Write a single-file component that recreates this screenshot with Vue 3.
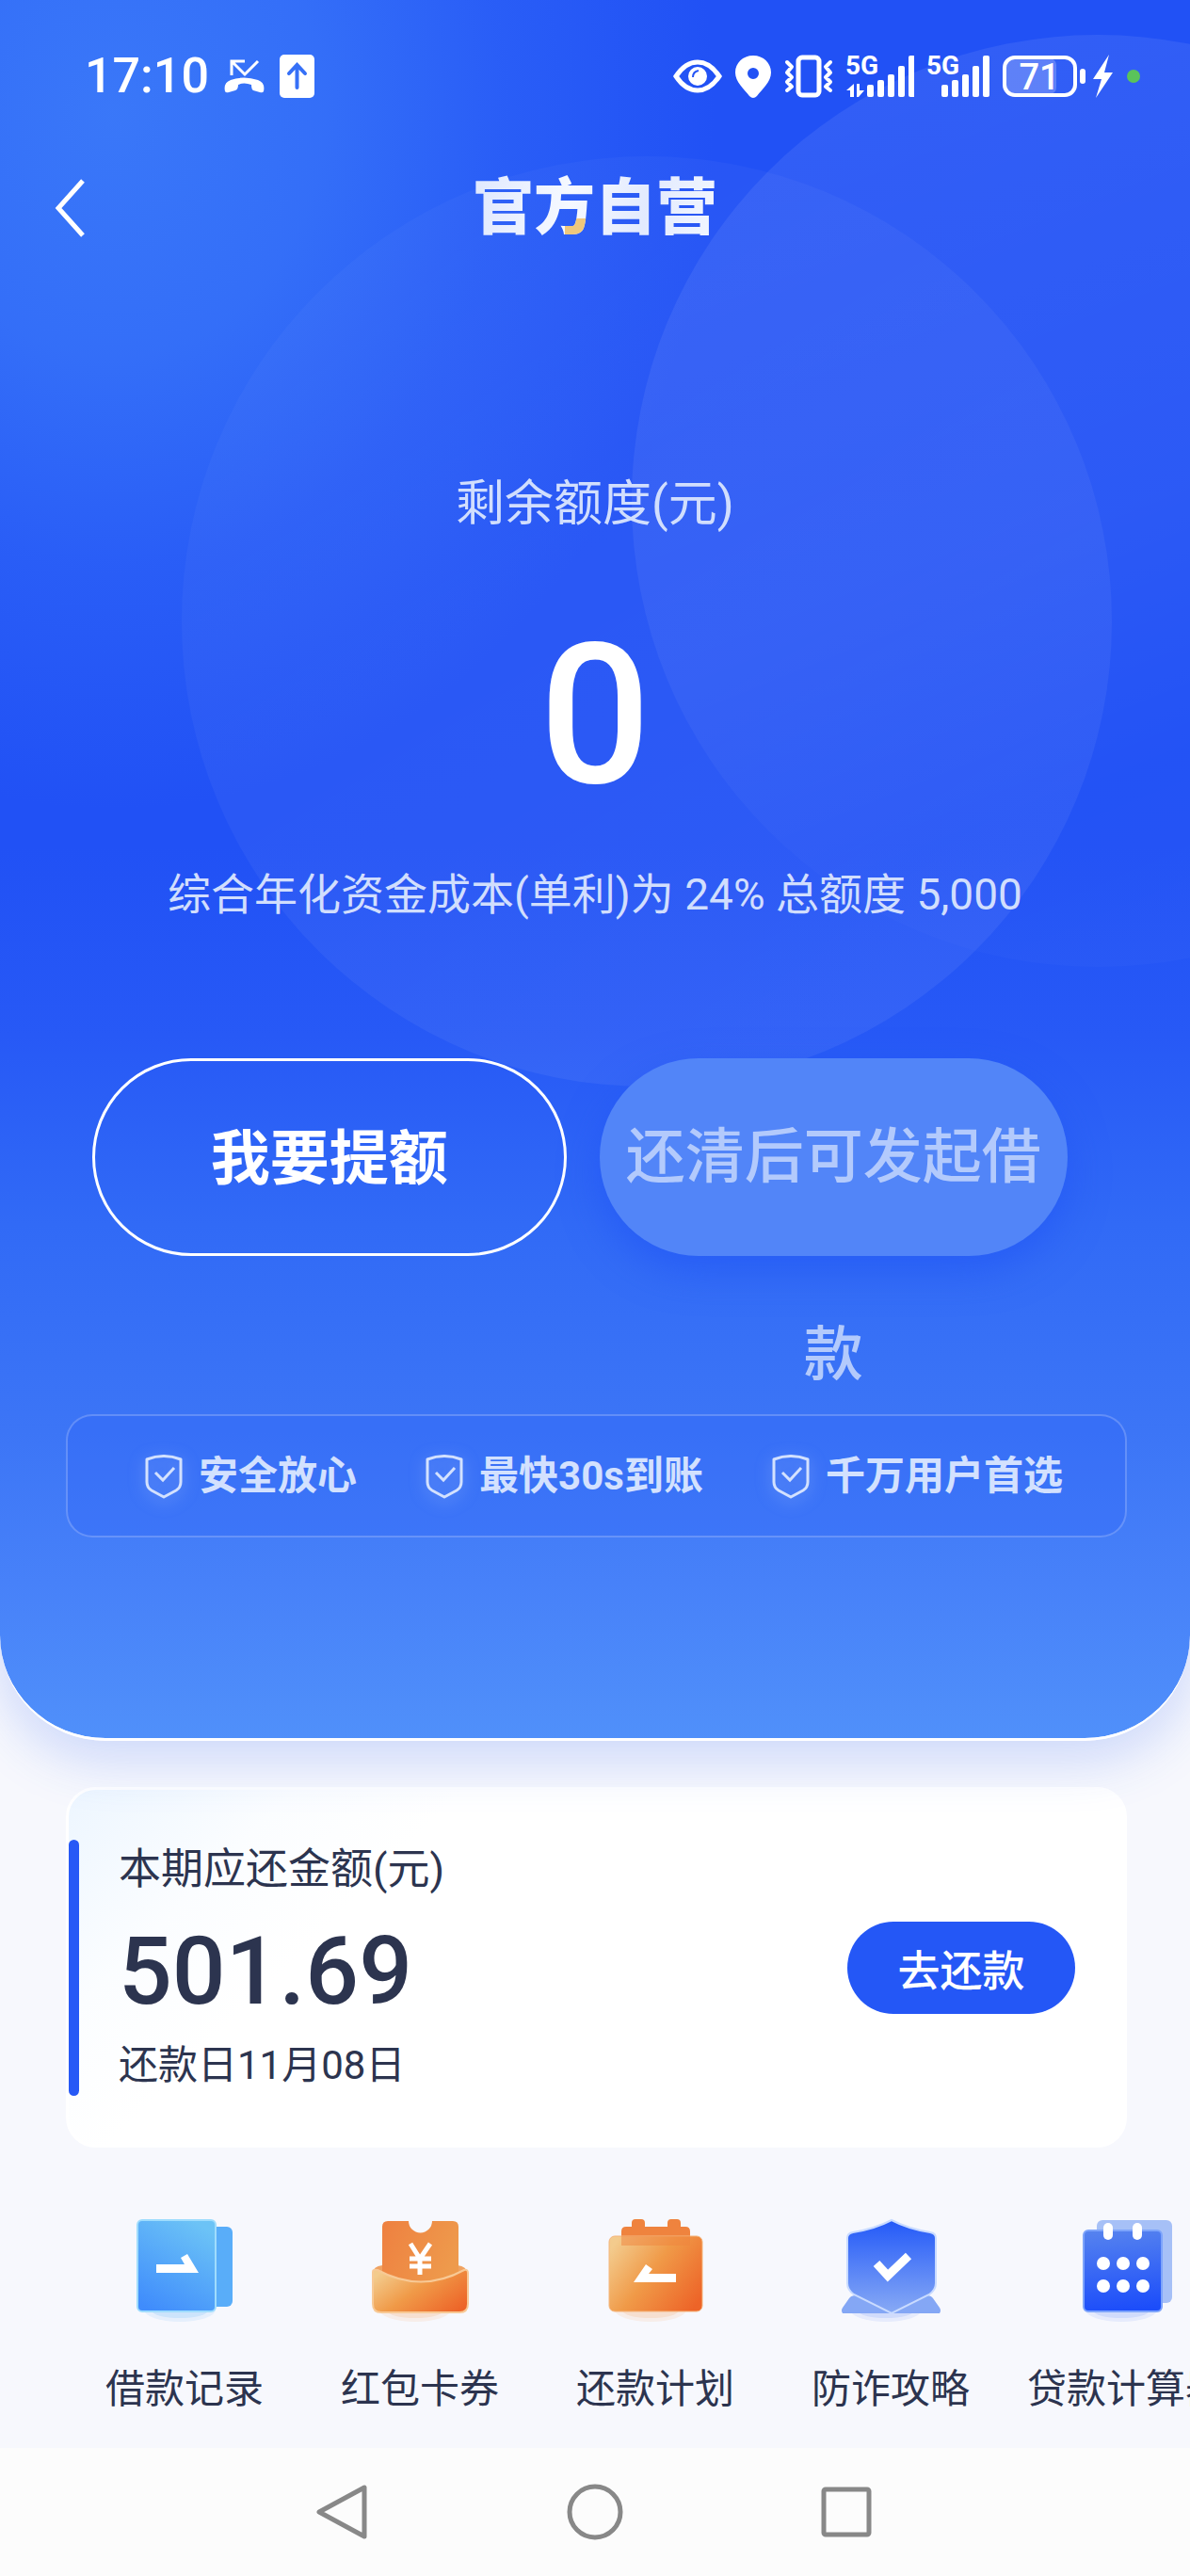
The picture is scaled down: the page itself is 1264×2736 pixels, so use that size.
<template>
  <div class="page">
    <section class="hero">
      <!-- 背景の大きな円 -->
      <svg class="hero-bg" viewBox="0 0 1264 1847" preserveAspectRatio="xMidYMin slice" aria-hidden="true">
        <defs>
          <linearGradient id="ringA" x1="0" y1="0" x2="0.6" y2="1">
            <stop offset="0" stop-color="#fff" stop-opacity="0.02" />
            <stop offset="1" stop-color="#fff" stop-opacity="0.06" />
          </linearGradient>
          <linearGradient id="ringB" x1="0.2" y1="0" x2="0.6" y2="1">
            <stop offset="0" stop-color="#fff" stop-opacity="0.08" />
            <stop offset="0.55" stop-color="#fff" stop-opacity="0.05" />
            <stop offset="0.8" stop-color="#fff" stop-opacity="0.01" />
            <stop offset="1" stop-color="#fff" stop-opacity="0.02" />
          </linearGradient>
        </defs>
        <circle cx="687" cy="660" r="494" fill="url(#ringA)" />
        <circle cx="1166" cy="532" r="495" fill="url(#ringB)" />
      </svg>

      <div class="status-bar">
        <div class="status-left">
          <span class="clock">17:10</span>
          <svg class="missed" width="43" height="36" viewBox="0 0 43 36">
            <path d="M8 17V2h14M9 3l13 13L36 2" fill="none" stroke="#fff" stroke-width="3" />
            <path d="M1 34Q-1 25 7 22Q21 17 36 22Q44 25 42 34Q41 36 38 35L31 33Q29 32 29 27Q21 24 15 27Q15 32 12 33L5 35Q2 36 1 34Z" fill="#fff" />
          </svg>
          <svg width="37" height="46" viewBox="0 0 37 46">
            <rect width="37" height="46" rx="5" fill="#fff" />
            <path d="M18.500 35V12M10 20l8.500-9 8.500 9" fill="none" stroke="#3670f7" stroke-width="4" stroke-linecap="round" />
          </svg>
        </div>
        <div class="status-right">
          <svg width="52" height="36" viewBox="0 0 52 36">
            <path d="M3 18Q13 3 26 3T49 18Q39 33 26 33T3 18Z" fill="none" stroke="#fff" stroke-width="5" />
            <circle cx="26" cy="18" r="10" fill="#fff" />
            <path d="M21 19q0-6 6-7" fill="none" stroke="#2455f5" stroke-width="2" />
          </svg>
          <svg width="38" height="46" viewBox="0 0 38 46">
            <path fill-rule="evenodd" d="M19 1C8 1 0 9 0 19c0 10 9 17 15 25q4 4 8 0c6-8 15-15 15-25C38 9 30 1 19 1Zm0 13a6 6 0 1 1 0 12a6 6 0 1 1 0-12Z" fill="#fff" />
          </svg>
          <svg width="52" height="46" viewBox="0 0 52 46" fill="none" stroke="#fff">
            <rect x="15" y="3" width="22" height="40" rx="4" stroke-width="5" />
            <path d="M3 8l5 5-5 6 5 5-5 5 5 5-5 4M49 8l-5 5 5 6-5 5 5 5-5 5 5 4" stroke-width="4" stroke-linejoin="round" stroke-linecap="round" />
          </svg>
          <svg width="72" height="62" viewBox="0 -8 72 62" fill="#fff">
            <text class="net" x="-1" y="21">5G</text>
            <path d="M8 31v14H4V38H0ZM11 45V31h3v7h5l-6 7Z" />
            <rect v-for="(b, i) in bars" :key="i" :x="22 + i * 11" :y="b" width="7" :height="45 - b" rx="2" />
          </svg>
          <svg width="66" height="62" viewBox="0 -8 66 62" fill="#fff">
            <text class="net" x="-1" y="21">5G</text>
            <rect v-for="(b, i) in bars" :key="i" :x="15 + i * 11" :y="b" width="7" :height="45 - b" rx="2" />
          </svg>
          <div class="power">
            <svg width="88" height="46" viewBox="0 0 88 46">
              <rect x="4" y="4" width="53" height="38" rx="7" fill="#fff" fill-opacity="0.22" />
              <rect x="2" y="3" width="75" height="40" rx="11" fill="none" stroke="#fff" stroke-width="4" />
              <rect x="82" y="15" width="6" height="16" rx="3" fill="#fff" />
              <text class="level" x="39" y="37" text-anchor="middle" fill="#fff">71</text>
            </svg>
            <svg width="22" height="46" viewBox="0 0 22 46">
              <path d="M17 0L0 26h9L3 46L21 19H12Z" fill="#fff" />
            </svg>
          </div>
          <span class="dot"></span>
        </div>
      </div>

      <header class="header">
        <button class="back" type="button" aria-label="返回">
          <svg width="34" height="64" viewBox="0 0 34 64">
            <path d="M30 3L4 32l26 29" fill="none" stroke="#fff" stroke-width="5" />
          </svg>
        </button>
        <h1 class="title">官方自营</h1>
      </header>

      <p class="quota-label">剩余额度(元)</p>
      <p class="quota">0</p>
      <p class="quota-note">综合年化资金成本(单利)为 24% 总额度 5,000</p>

      <div class="actions">
        <button class="btn btn-raise" type="button">我要提额</button>
        <button class="btn btn-borrow" type="button">还清后可发起借款</button>
      </div>

      <ul class="badges">
        <li v-for="t in badges" :key="t">
          <svg width="40" height="48" viewBox="0 0 40 48" fill="none" stroke="#d3e1fe" stroke-width="3">
            <path d="M2 6Q20-1 38 6V30Q38 36 33 39L20 46L7 39Q2 36 2 30Z" stroke-linejoin="round" />
            <path d="M11 20l8 8 12-13" />
          </svg>
          <span>{{ t }}</span>
        </li>
      </ul>
    </section>

    <section class="bill">
      <span class="bill-bar"></span>
      <div class="bill-info">
        <p class="bill-label">本期应还金额(元)</p>
        <p class="bill-amount">501.69</p>
        <p class="bill-date">还款日11月08日</p>
      </div>
      <button class="repay" type="button">去还款</button>
    </section>

    <nav class="menu">
      <a v-for="m in menus" :key="m.icon" href="#" class="menu-item">
        <svg width="120" height="120" viewBox="0 0 120 120" aria-hidden="true">
          <defs>
            <linearGradient id="gBook" x1="0.7" y1="0" x2="0.2" y2="1">
              <stop offset="0" stop-color="#6cc3f6" />
              <stop offset="1" stop-color="#3f8cfc" />
            </linearGradient>
            <linearGradient id="gTicket" x1="0" y1="0" x2="1" y2="0.4">
              <stop offset="0" stop-color="#ee8040" />
              <stop offset="1" stop-color="#ee9a4c" />
            </linearGradient>
            <linearGradient id="gOrange" x1="0" y1="0.2" x2="1" y2="0.8">
              <stop offset="0" stop-color="#f3cb8d" />
              <stop offset="0.45" stop-color="#f09a48" />
              <stop offset="1" stop-color="#ed6428" />
            </linearGradient>
            <linearGradient id="gShield" x1="0" y1="0" x2="0" y2="1">
              <stop offset="0" stop-color="#2359f8" />
              <stop offset="1" stop-color="#88aaf5" />
            </linearGradient>
            <linearGradient id="gCal" x1="0.3" y1="0" x2="0.4" y2="1">
              <stop offset="0" stop-color="#5582ef" />
              <stop offset="1" stop-color="#1c4dfa" />
            </linearGradient>
          </defs>
          <ellipse cx="55" cy="104" rx="38" ry="13" :fill="m.tint" fill-opacity="0.12" />
          <ellipse cx="55" cy="105" rx="30" ry="8" :fill="m.tint" fill-opacity="0.18" />

          <g v-if="m.icon === 'record'">
            <rect x="80" y="16" width="31" height="85" rx="6" fill="#59adf9" />
            <rect x="10" y="9" width="83" height="97" rx="5" fill="url(#gBook)" stroke="#9fdcfd" stroke-width="2" />
            <path d="M30 56H60L56 49L63 45L75 65H30Z" fill="#fff" />
          </g>
          <g v-else-if="m.icon === 'coupon'">
            <path d="M10 66q0-8 10-9h80q10 1 10 9v30H10Z" fill="#f0a261" />
            <path d="M20 16q0-6 6-6H48a12.500 12.500 0 0 0 25 0H95q6 0 6 6V85H20Z" fill="url(#gTicket)" />
            <path d="M10 64q0-3 5-2Q61 87 107 62q4-1 4 3V98q0 9-9 9H19q-9 0-9-9Z" fill="url(#gOrange)" stroke="#f8c995" stroke-width="2" />
            <path d="M50 34l10 16M71 34L60 50v17M49 50H72M49 58H72" fill="none" stroke="#fff" stroke-width="5" />
          </g>
          <g v-else-if="m.icon === 'plan'">
            <path d="M24 30V21q0-5 5-5h6V12q0-4 4-4h6q4 0 4 4v4H73V12q0-4 4-4h6q4 0 4 4v4h5q5 0 5 5V35H24Z" fill="#ef833e" />
            <rect x="11" y="26" width="99" height="80" rx="6" fill="url(#gOrange)" stroke="#f5b67d" stroke-width="1" />
            <rect x="24" y="26" width="73" height="10" fill="#ef833e" fill-opacity="0.5" />
            <path d="M37 75L50 56L57 61L53 66H82V75Z" fill="#fff" />
          </g>
          <g v-else-if="m.icon === 'guard'">
            <path d="M9 108q-2-3 0-6l7-10q2-3 7-3h75q5 0 7 3l7 10q2 3 0 6Z" fill="#84a7f5" />
            <path d="M61 9Q78 18 102 22q6 1 6 6V76Q108 83 101 88L61 108L21 88Q14 83 14 76V28q0-5 6-6Q44 18 61 9Z" fill="url(#gShield)" stroke="#c9dbff" stroke-width="2" />
            <path d="M45 55L57 68L79 47" fill="none" stroke="#fff" stroke-width="9" />
          </g>
          <g v-else>
            <rect x="29" y="9" width="80" height="88" rx="6" fill="#a6c0f7" />
            <rect x="15" y="20" width="83" height="86" rx="5" fill="url(#gCal)" stroke="#7da4fb" stroke-width="2" />
            <rect x="36" y="12" width="10" height="18" rx="5" fill="#fff" />
            <rect x="67" y="12" width="10" height="18" rx="5" fill="#fff" />
            <g fill="#fff">
              <circle v-for="n in 6" :key="n" :cx="36 + ((n - 1) % 3) * 21" :cy="n > 3 ? 79 : 55" r="7" />
            </g>
          </g>
        </svg>
        <span>{{ m.label }}</span>
      </a>
    </nav>

    <footer class="sys-nav">
      <button type="button" aria-label="后退">
        <svg width="60" height="60" viewBox="0 0 60 60">
          <path d="M53 4V56L5 30Z" />
        </svg>
      </button>
      <button type="button" aria-label="主页">
        <svg width="60" height="60" viewBox="0 0 60 60">
          <circle cx="30" cy="30" r="27" />
        </svg>
      </button>
      <button type="button" aria-label="最近任务">
        <svg width="60" height="60" viewBox="0 0 60 60">
          <rect x="5" y="6" width="48" height="48" rx="2" />
        </svg>
      </button>
    </footer>
  </div>
</template>

<script setup>
// 信号バーの上端
const bars = [32, 27, 21, 12, 1]

const badges = ['安全放心', '最快30s到账', '千万用户首选']

const menus = [
  { icon: 'record', label: '借款记录', tint: '#5fb4f8' },
  { icon: 'coupon', label: '红包卡券', tint: '#f3a35c' },
  { icon: 'plan',   label: '还款计划', tint: '#f3a35c' },
  { icon: 'guard',  label: '防诈攻略', tint: '#6f98f8' },
  { icon: 'calc',   label: '贷款计算器', tint: '#6f98f8' },
]
</script>

<style>
body {
  margin: 0;
  background: #f7f8fd;
}
</style>

<style scoped>
.page {
  display: flex;
  flex-direction: column;
  min-height: 100vh;
  overflow: hidden;
  background: #f7f8fd;
  color: #2c344f;
  font-family: Roboto, "Noto Sans CJK SC", sans-serif;
}

p, h1, ul {
  margin: 0;
  padding: 0;
}

button {
  padding: 0;
  border: 0;
  background: none;
  color: inherit;
  font-family: inherit;
  cursor: pointer;
}

svg {
  display: block;
  flex: none;
}

.hero {
  position: relative;
  display: flex;
  flex-direction: column;
  padding-bottom: 213px;
  border-bottom: 3px solid #fff;
  border-radius: 0 0 112px 112px;
  background:
    radial-gradient(ellipse 640px 740px at 120px 120px, rgba(62, 126, 249, 0.85) 0, rgba(58, 120, 249, 0.75) 35%, rgba(54, 112, 249, 0.4) 65%, rgba(50, 105, 250, 0) 100%) padding-box,
    linear-gradient(#2151f5 0, #2151f5 900px, #2759f6 1100px, #316af6 1300px, #3c75f6 1520px, #4781f9 1680px, #5090fa 1847px) padding-box;
  box-shadow: 0 20px 56px rgba(50, 100, 240, 0.22);
  color: #fff;
  text-align: center;
}

.hero-bg {
  position: absolute;
  inset: 0;
  width: 100%;
  height: 100%;
}

.hero > :not(.hero-bg) {
  position: relative;
}

.status-bar {
  display: flex;
  justify-content: space-between;
  align-items: center;
  height: 162px;
  padding: 0 53px 0 90px;
}

.status-left,
.status-right,
.power {
  display: flex;
  align-items: center;
}

.status-left { gap: 16px; }
.status-right { gap: 14px; }
.power { gap: 8px; }

.clock {
  font-size: 52px;
  font-weight: 500;
  line-height: 64px;
}

.net {
  font-size: 28px;
  font-weight: 700;
}

.level {
  font-size: 38px;
  font-weight: 500;
}

.dot {
  width: 14px;
  height: 14px;
  border-radius: 50%;
  background: #5ac35a;
}

.header {
  display: grid;
  grid-template-columns: 1fr auto 1fr;
  align-items: center;
  height: 118px;
  padding: 0 58px;
}

.back {
  justify-self: start;
}

/* 「方」のはねだけ金色 */
.title {
  background:
    linear-gradient(#eec77c, #eec77c) 98px 51px / 30px 29px no-repeat,
    linear-gradient(100deg, #dfe8fe, #f6f9ff 40%, #e2eafe 70%, #f3f7ff);
  background-clip: text;
  -webkit-background-clip: text;
  color: transparent;
  font-size: 65px;
  font-weight: 900;
  line-height: 80px;
}

.quota-label {
  margin-top: 220px;
  color: #d1defd;
  font-size: 52px;
  line-height: 72px;
}

.quota {
  margin-top: 80px;
  font-size: 208px;
  font-weight: 500;
  line-height: 216px;
}

.quota-note {
  margin-top: 50px;
  color: #d1defd;
  font-size: 46px;
  line-height: 64px;
}

.actions {
  display: flex;
  gap: 35px;
  height: 210px;
  margin-top: 142px;
  padding: 0 130px 0 98px;
}

.btn {
  flex: 1;
  border-radius: 105px;
  font-size: 63px;
}

.btn-raise {
  box-sizing: border-box;
  border: 3px solid #fff;
  font-weight: 700;
  line-height: 208px;
}

.btn-borrow {
  align-self: flex-start;
  height: 210px;
  background: #5285f8;
  box-shadow: 0 16px 40px rgba(32, 84, 245, 0.6);
  color: #b3cafc;
  font-weight: 500;
  line-height: 210px;
}

.badges {
  display: flex;
  justify-content: space-between;
  align-items: center;
  box-sizing: border-box;
  height: 131px;
  margin: 168px 67px 0 70px;
  padding: 0 66px 0 82px;
  border: 2px solid rgba(255, 255, 255, 0.22);
  border-radius: 28px;
  background: rgba(45, 100, 250, 0.3);
  color: #d3e1fe;
  font-size: 42px;
  font-weight: 700;
  line-height: 60px;
  list-style: none;
}

.badges li {
  display: flex;
  align-items: center;
  gap: 17px;
}

.badges svg {
  filter: drop-shadow(0 4px 8px rgba(200, 220, 255, 0.5));
}

.bill {
  display: flex;
  align-items: center;
  margin: 49px 67px 0 70px;
  padding: 53px 52px 52px 0;
  border: 3px solid #fff;
  border-radius: 32px;
  background: linear-gradient(135deg, #edf6ff 0, #fbfdff 16%, #fff 28%);
}

.bill-bar {
  align-self: stretch;
  width: 11px;
  border-radius: 6px;
  background: #2759f6;
}

.bill-info {
  flex: 1;
  padding-left: 42px;
}

.bill-label {
  font-size: 45px;
  line-height: 64px;
}

.bill-amount {
  margin: 20px 0 12px;
  font-size: 100px;
  font-weight: 500;
  line-height: 112px;
}

.bill-date {
  font-size: 42px;
  line-height: 64px;
}

.repay {
  width: 242px;
  height: 98px;
  border-radius: 49px;
  background: #2457f6;
  color: #fff;
  font-size: 45px;
  font-weight: 500;
}

.menu {
  display: flex;
  margin-top: 68px;
  padding: 0 0 31px 71px;
}

.menu-item {
  display: flex;
  flex: 0 0 250px;
  flex-direction: column;
  align-items: center;
  gap: 39px;
  color: inherit;
  font-size: 42px;
  line-height: 60px;
  text-decoration: none;
}

.sys-nav {
  display: flex;
  justify-content: center;
  align-items: center;
  gap: 208px;
  height: 136px;
  margin-top: auto;
  background: #fcfcfc;
}

.sys-nav svg {
  fill: none;
  stroke: #888;
  stroke-width: 5;
  stroke-linejoin: round;
}
</style>
